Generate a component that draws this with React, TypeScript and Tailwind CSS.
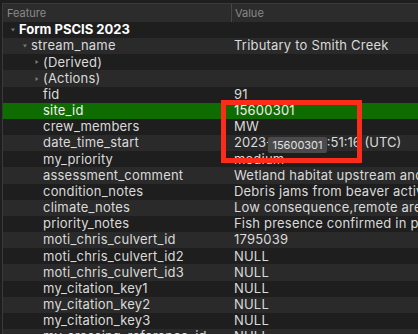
import React from 'react'

type Row = { name: string; value?: string; level: number; arrow?: 'down' | 'right'; bold?: boolean; selected?: boolean; tight?: boolean }

const rows: Row[] = [
  { name: 'Form PSCIS 2023', level: 0, arrow: 'down', bold: true },
  { name: 'stream_name', value: 'Tributary to Smith Creek', level: 1, arrow: 'down' },
  { name: '(Derived)', level: 2, arrow: 'right' },
  { name: '(Actions)', level: 2, arrow: 'right' },
  { name: 'fid', value: '91', level: 2 },
  { name: 'site_id', value: '15600301', level: 2, selected: true },
  { name: 'crew_members', value: 'MW', level: 2 },
  { name: 'date_time_start', value: '2023-06-22 10:51:16 (UTC)', level: 2, tight: true },
  { name: 'my_priority', value: 'medium', level: 2 },
  { name: 'assessment_comment', value: 'Wetland habitat upstream and downstream of crossing', level: 2 },
  { name: 'condition_notes', value: 'Debris jams from beaver activity upstream', level: 2 },
  { name: 'climate_notes', value: 'Low consequence,remote area with low traffic', level: 2 },
  { name: 'priority_notes', value: 'Fish presence confirmed in past sampling', level: 2 },
  { name: 'moti_chris_culvert_id', value: '1795039', level: 2 },
  { name: 'moti_chris_culvert_id2', value: 'NULL', level: 2 },
  { name: 'moti_chris_culvert_id3', value: 'NULL', level: 2 },
  { name: 'my_citation_key1', value: 'NULL', level: 2 },
  { name: 'my_citation_key2', value: 'NULL', level: 2 },
  { name: 'my_citation_key3', value: 'NULL', level: 2 },
  { name: 'my_crossing_reference_id', value: 'NULL', level: 2 },
]

function Arrow({ dir }: { dir: 'down' | 'right' }) {
  return (
    <svg width="12" height="8" viewBox="0 0 12 8" className="shrink-0">
      {dir === 'down'
        ? <polygon points="4,2.5 8,2.5 6,5.5" fill="#7a7a7a" />
        : <polygon points="4.5,2 7.5,4 4.5,6" fill="#7a7a7a" />}
    </svg>
  )
}

export default function App() {
  return (
    <div className="relative w-[418px] h-[334px] overflow-hidden bg-[#1e1e1e] pt-[3px] pl-[2px] font-['Inter','Liberation_Sans',sans-serif]">
      <div className="border-l border-t border-[#3a3a3a]">
        {/* header */}
        <div className="flex h-[18px] items-center bg-[#2c2c2c] text-[11px] text-[#8a8a8a]">
          <div className="w-[228px] pl-[4px]">Feature</div>
          <div className="h-full flex items-center border-l border-[#474747] pl-[3px]">Value</div>
        </div>

        {rows.map((r, i) => (
          <div
            key={r.name}
            className={`flex h-[16.16px] items-center text-[13px] tracking-[0.2px] whitespace-nowrap ${
              r.selected ? 'bg-[#0f6c00] text-[#f0f0f0]' : i % 2 ? 'bg-[#2a2a2a] text-[#dadada]' : 'bg-[#1e1e1e] text-[#dadada]'
            }`}
          >
            <div className="w-[228px] shrink-0 flex items-center overflow-hidden">
              <div style={{ width: 4 + 12 * r.level }} className="shrink-0" />
              {r.arrow ? <Arrow dir={r.arrow} /> : <div className="w-[12px] shrink-0" />}
              <span className={r.bold ? 'font-bold text-white tracking-normal' : ''}>{r.name}</span>
            </div>
            <div className={r.tight ? 'pl-[3px] tracking-normal' : 'pl-[3px]'}>{r.value}</div>
          </div>
        ))}
      </div>

      {/* tooltip */}
      <div className="absolute left-[268px] top-[137px] w-[59px] h-[16px] flex items-center justify-center rounded-[2px] bg-[#4a4a4a] text-[11px] text-[#e2e2e2]">
        15600301
      </div>

      {/* annotation box */}
      <div className="absolute left-[221px] top-[100px] w-[141px] h-[63px] border-[5px] border-[#fb2d1a]" />
    </div>
  )
}
